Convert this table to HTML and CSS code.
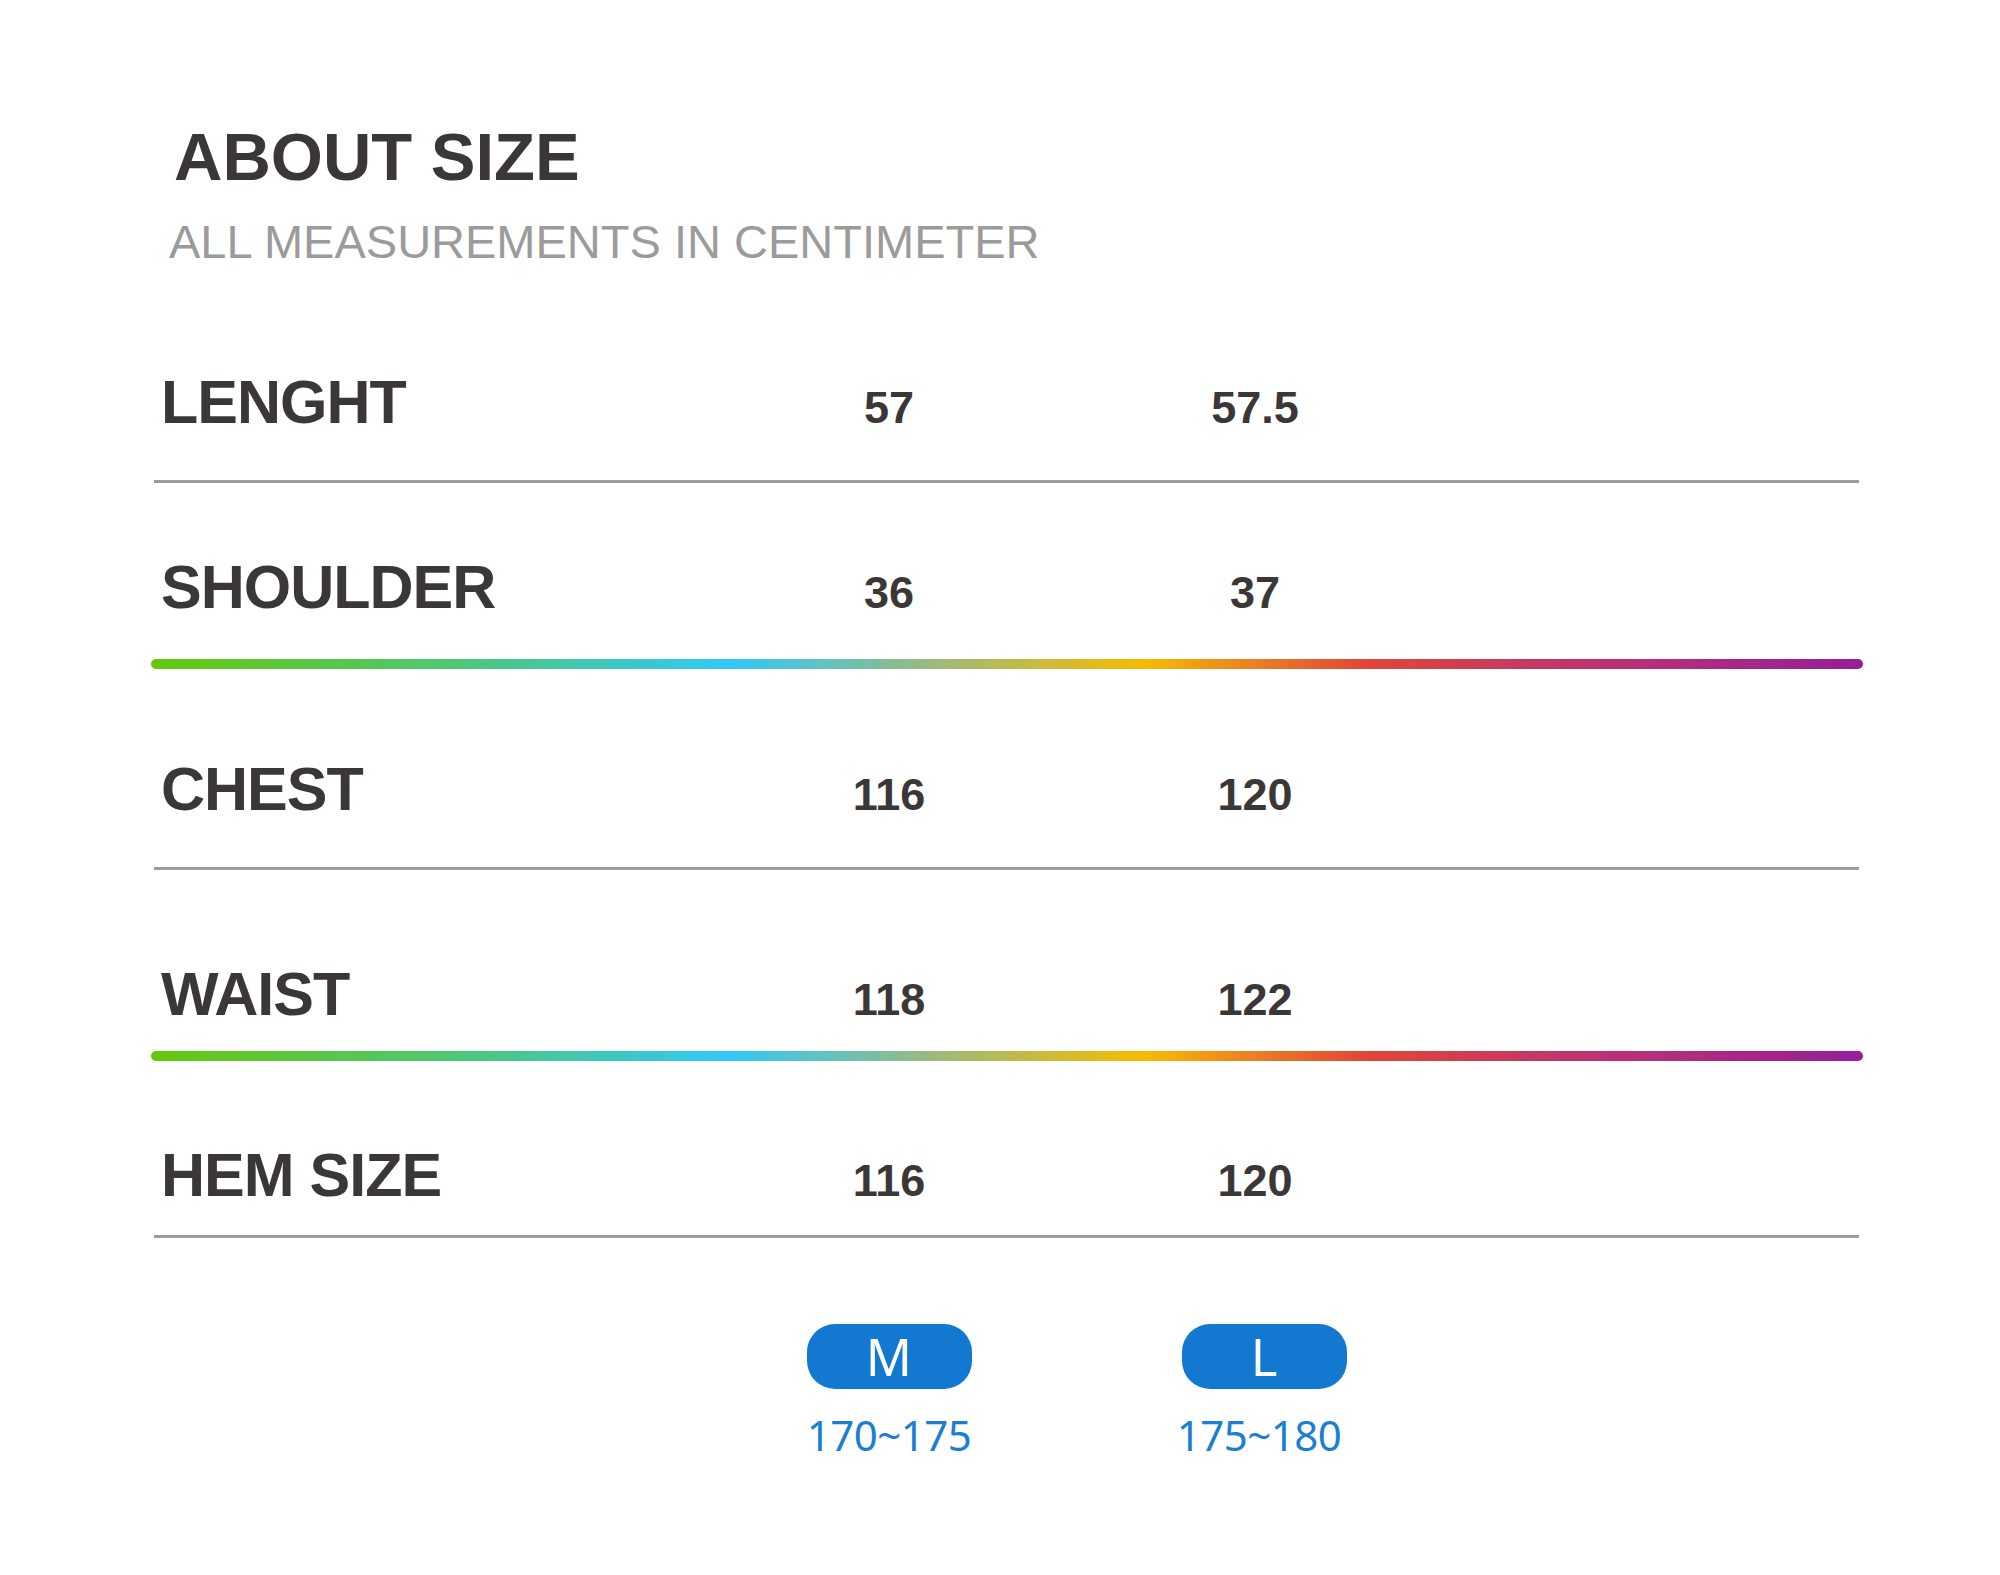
FILE: index.html
```html
<!DOCTYPE html>
<html>
<head>
<meta charset="utf-8">
<link rel="stylesheet" href="styles.css">
</head>
<body>
<div class="page">
  <header class="head">
    <h1 class="title">ABOUT SIZE</h1>
    <p class="subtitle">ALL MEASUREMENTS IN CENTIMETER</p>
  </header>
  <section class="chart">
    <div class="row r1"><span class="label">LENGHT</span><span class="val">57</span><span class="val">57.5</span></div>
    <div class="sep gray s1"></div>
    <div class="row r2"><span class="label">SHOULDER</span><span class="val">36</span><span class="val">37</span></div>
    <div class="sep rainbow s2"></div>
    <div class="row r3"><span class="label">CHEST</span><span class="val">116</span><span class="val">120</span></div>
    <div class="sep gray s3"></div>
    <div class="row r4"><span class="label">WAIST</span><span class="val">118</span><span class="val">122</span></div>
    <div class="sep rainbow s4"></div>
    <div class="row r5"><span class="label">HEM SIZE</span><span class="val">116</span><span class="val">120</span></div>
    <div class="sep gray s5"></div>
    <div class="sizes">
      <div class="size size-m"><span class="pill">M</span><span class="range">170~175</span></div>
      <div class="size size-l"><span class="pill">L</span><span class="range">175~180</span></div>
    </div>
  </section>
</div>
</body>
</html>
```
FILE: styles.css
```css
html, body {
  margin: 0;
  padding: 0;
  background: #ffffff;
}
.page {
  width: 2000px;
  height: 1575px;
  font-family: "Liberation Sans", Arial, sans-serif;
  color: #3b3737;
}
.head {
  padding-top: 123px;
}
.title {
  margin: 0 0 0 174px;
  font-size: 67px;
  line-height: 67px;
  font-weight: 700;
  color: #3b3737;
}
.subtitle {
  margin: 28px 0 0 169px;
  font-size: 47px;
  line-height: 47px;
  font-weight: 400;
  color: #9b9b9b;
}
.chart {
  margin-left: 151px;
  width: 1712px;
}
.row {
  display: grid;
  grid-template-columns: 638px 200px 166px 200px;
  align-items: baseline;
}
.label {
  grid-column: 1;
  padding-left: 10px;
  font-size: 61px;
  line-height: 61px;
  font-weight: 700;
  letter-spacing: -1px;
  white-space: nowrap;
}
.val {
  font-size: 45px;
  line-height: 45px;
  font-weight: 700;
  text-align: center;
}
.val:nth-child(2) { grid-column: 2; }
.val:nth-child(3) { grid-column: 4; }

.r1 { margin-top: 107px; }
.r2 { margin-top: 74px; }
.r3 { margin-top: 90px; }
.r4 { margin-top: 94px; }
.r5 { margin-top: 84px; }

.sep.gray {
  height: 3px;
  margin-left: 3px;
  margin-right: 4px;
  background: #9c9c9c;
}
.sep.rainbow {
  height: 10px;
  border-radius: 5px;
  background: linear-gradient(90deg, #66c70c 0%, #4ec776 18%, #33c8f9 34%, #9dba78 46%, #f6bb02 58%, #ea7a26 65%, #e14537 71%, #c2366a 82%, #961e9a 100%);
}
.s1 { margin-top: 47px; }
.s2 { margin-top: 41px; }
.s3 { margin-top: 47px; }
.s4 { margin-top: 26px; }
.s5 { margin-top: 29px; }

.sizes {
  display: grid;
  grid-template-columns: 200px 175px 200px;
  margin-left: 638px;
  margin-top: 86px;
}
.size {
  display: flex;
  flex-direction: column;
  align-items: center;
}
.size-m { grid-column: 1; }
.size-l { grid-column: 3; }
.pill {
  display: flex;
  align-items: center;
  justify-content: center;
  width: 165px;
  height: 65px;
  border-radius: 28px;
  background: #1378d0;
  color: #ffffff;
  font-family: "Noto Sans", "Open Sans", sans-serif;
  font-size: 51px;
  line-height: 65px;
}
.range {
  margin-top: 25px;
  font-family: "Noto Sans", "Open Sans", sans-serif;
  font-size: 42px;
  line-height: 42px;
  letter-spacing: -0.5px;
  color: #1a7ed3;
}
.size-l .range { margin-right: 10px; }
```
